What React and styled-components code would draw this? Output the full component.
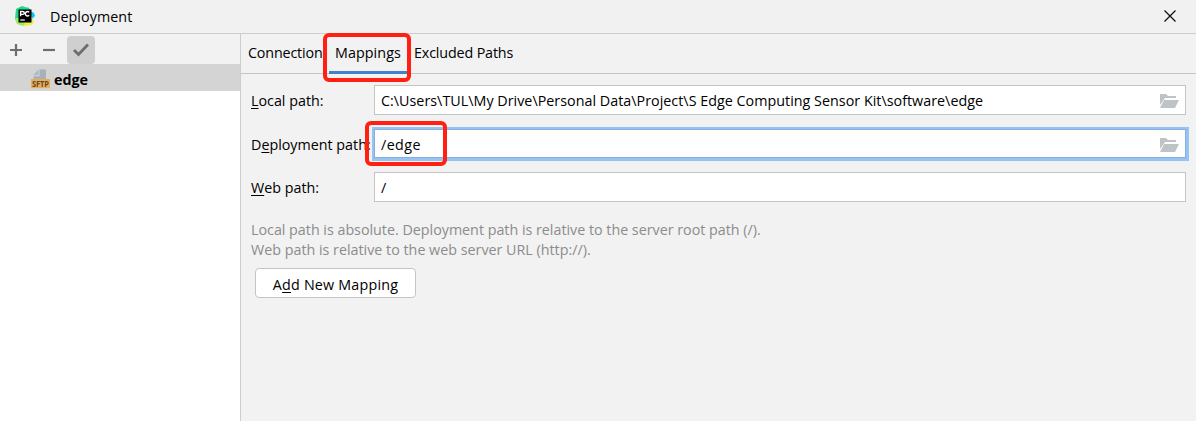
import React from 'react';
import styled, { createGlobalStyle } from 'styled-components';

const GlobalStyle = createGlobalStyle`
  * { box-sizing: border-box; }
  body {
    margin: 0;
    background: #f2f2f2;
    color: #000;
    font: 14.3px/20px "Open Sans", "Noto Sans", sans-serif;
    overflow: hidden;
  }
`;

const Window = styled.div`
  width: 1196px;
  height: 421px;
  display: flex;
  flex-direction: column;
  background: #f2f2f2;
  border-top-left-radius: 8px;
`;

const TitleBar = styled.header`
  height: 34px;
  flex: none;
  display: flex;
  align-items: center;
  padding: 0 19px 1px 15px;
  border-bottom: 1px solid #cdcdcd;
  background: #f1f1f1;
`;

const Title = styled.div`
  flex: 1;
  margin-left: 15px;
  padding-top: 1px;
`;

const Text = styled.span`
  white-space: pre;
  letter-spacing: ${(p) => p.$track || 0}px;
`;

const Body = styled.div`
  flex: 1;
  display: flex;
  min-height: 0;
`;

const Sidebar = styled.aside`
  width: 241px;
  flex: none;
  background: #fff;
  border-right: 1px solid #cdcdcd;
`;

const Toolbar = styled.div`
  height: 30px;
  display: flex;
  align-items: center;
  gap: 4.5px;
  padding: 1px 0 0 2px;
  background: #f2f2f2;
`;

const ToolButton = styled.div`
  width: 28px;
  height: 28px;
  display: grid;
  place-items: center;
  border-radius: 4px;
  background: ${(p) => (p.$active ? '#cfcfcf' : 'transparent')};
`;

const ServerRow = styled.div`
  height: 27px;
  display: flex;
  align-items: center;
  gap: 4px;
  padding: 3px 0 0 31px;
  background: #d4d4d4;
  font-weight: 700;
`;

const ServerName = styled.div`
  padding-top: 2px;
`;

const Main = styled.main`
  flex: 1;
  min-width: 0;
`;

const Tabs = styled.nav`
  height: 40px;
  display: flex;
  border-bottom: 1px solid #c6c6c6;
`;

const Tab = styled.div`
  position: relative;
  width: ${(p) => p.$width}px;
  height: 40px;
  padding: 9px 0 0 ${(p) => p.$pad}px;
  border-bottom: 3px solid ${(p) => (p.$active ? '#4083c9' : 'transparent')};
`;

const Highlight = styled.div`
  position: absolute;
  z-index: 2;
  left: ${(p) => p.$x}px;
  top: ${(p) => p.$y}px;
  width: ${(p) => p.$w}px;
  height: ${(p) => p.$h}px;
  border: 4px solid #ff2012;
  border-radius: 6px;
  pointer-events: none;
`;

const Form = styled.div`
  display: flex;
  flex-direction: column;
  gap: 14px;
  padding: 11px 10px 0 10px;
`;

const Field = styled.label`
  height: ${(p) => p.$height || 30}px;
  display: flex;
  align-items: center;
`;

const FieldName = styled.span`
  width: 123px;
  flex: none;
  padding-top: ${(p) => p.$drop ?? 3}px;
  white-space: nowrap;
`;

const Input = styled.div`
  position: relative;
  flex: 1;
  height: 100%;
  display: flex;
  align-items: center;
  justify-content: space-between;
  padding: ${(p) => p.$drop ?? 3}px 6px 0 6px;
  background: #fff;
  border: 1px solid ${(p) => (p.$focused ? '#87afda' : '#c4c4c4')};
  box-shadow: ${(p) => (p.$focused ? '0.5px 0.5px 0 2.5px #97c3f3' : 'none')};
`;

const Mnemonic = styled.u`
  text-decoration-thickness: 1px;
  text-underline-offset: 2px;
`;

const Hint = styled.div`
  margin: 18px 0 0 10px;
  color: #8c8c8c;
`;

const Button = styled.div`
  width: 161px;
  height: 30px;
  margin: 8px 0 0 14px;
  display: flex;
  align-items: center;
  justify-content: center;
  padding-top: 4px;
  background: #fff;
  border: 1px solid #c4c4c4;
  border-radius: 4px;
`;

const PyCharmIcon = () => (
  <svg width="20" height="20" viewBox="0 0 20 20">
    <path d="M1 3 7 0l6 2 1 6-5 11-7-2L0 13Z" fill="#21d789" />
    <path d="m12 1 3 2 1 4-5-1Z" fill="#18d68c" />
    <path d="m15 5 4 2 1 3-3 3-3-5Z" fill="#07c3f2" />
    <path d="m4 16 12-6 3 5-2 4-8 1Z" fill="#e8f34a" />
    <path d="M0 12h4l6 6-2 2-6-2Z" fill="#9bea62" />
    <rect x="3.5" y="3.5" width="13" height="13" />
    <path d="M5.6 10.2V5.5h2.2c2 0 2 2.9 0 2.9H5.8M14.2 6.3C12.5 4.8 10.4 5.8 10.4 7.8s2.1 3 3.8 1.5" fill="none" stroke="#fff" strokeWidth="1.4" />
    <path d="M5.3 13.4h4.5v1.2H5.3z" fill="#fff" />
  </svg>
);

const CloseIcon = () => (
  <svg width="14" height="14" viewBox="0 0 14 14">
    <path d="m1.5 1.5 11 11m0-11-11 11" fill="none" stroke="#111" strokeWidth="1.3" />
  </svg>
);

const ToolIcon = ({ d, width }) => (
  <svg width="20" height="20" viewBox="0 0 20 20">
    <path d={d} fill="none" stroke="#6e6e6e" strokeWidth={width} />
  </svg>
);

const SftpLabel = styled.text`
  font: 700 9px "Open Sans", sans-serif;
  fill: #5b4830;
`;

const SftpIcon = () => (
  <svg width="19" height="24" viewBox="0 -2 19 24">
    <path d="M7.5.5v5.7H2Z" fill="#9aa7b0" opacity=".6" />
    <path d="M8.5.5H15V10H2.5V7.2h6Z" fill="#9aa7b0" opacity=".8" />
    <path d="M0 10h19v9.2H0z" fill="#e9ad57" />
    <SftpLabel x="1" y="17.9" textLength="17" lengthAdjust="spacingAndGlyphs">SFTP</SftpLabel>
  </svg>
);

const FolderIcon = () => (
  <svg width="20" height="17" viewBox="0 0 20 17">
    <path d="M1 12V1h6l2 2h8v2H6Z" fill="#bec3c7" />
    <path d="M5 7h15l-4 8H1Z" fill="#bec3c7" />
  </svg>
);

export default function App() {
  return (
    <>
      <GlobalStyle />
      <Window>
        <TitleBar>
          <PyCharmIcon />
          <Title><Text $track={0.07}>Deployment</Text></Title>
          <CloseIcon />
        </TitleBar>
        <Body>
          <Sidebar>
            <Toolbar>
              <ToolButton><ToolIcon d="M10 4v12M4 10h12" width={2.2} /></ToolButton>
              <ToolButton><ToolIcon d="M4 10h12" width={2.2} /></ToolButton>
              <ToolButton $active><ToolIcon d="m3 10 4.5 4.5L17 4.5" width={2.8} /></ToolButton>
            </Toolbar>
            <ServerRow>
              <SftpIcon />
              <ServerName><Text>edge</Text></ServerName>
            </ServerRow>
          </Sidebar>
          <Main>
            <Tabs>
              <Tab $width={88} $pad={7}><Text $track={-0.15}>Connection</Text></Tab>
              <Tab $width={79} $pad={6} $active>
                <Text $track={0.08}>Mappings</Text>
                <Highlight $x={-6} $y={-1} $w={88} $h={49} />
              </Tab>
              <Tab $width={120} $pad={6}><Text $track={-0.14}>Excluded Paths</Text></Tab>
            </Tabs>
            <Form>
              <Field $height={30}>
                <FieldName $drop={2}><Text><Mnemonic>L</Mnemonic>ocal path:</Text></FieldName>
                <Input $drop={2}>
                  <Text $track={0.025}>C:\Users\TUL\My Drive\Personal Data\Project\S Edge Computing Sensor Kit\software\edge</Text>
                  <FolderIcon />
                </Input>
              </Field>
              <Field $height={29}>
                <FieldName><Text>D<Mnemonic>e</Mnemonic>ployment path:</Text></FieldName>
                <Input $focused>
                  <Text $track={0.4}>/edge</Text>
                  <FolderIcon />
                  <Highlight $x={-10} $y={-9} $w={82} $h={45} />
                </Input>
              </Field>
              <Field>
                <FieldName $drop={2}><Text><Mnemonic>W</Mnemonic>eb path:</Text></FieldName>
                <Input $drop={2}><Text>/</Text></Input>
              </Field>
            </Form>
            <Hint>
              <div><Text $track={-0.01}>Local path is absolute. Deployment path is relative to the server root path (/).</Text></div>
              <div><Text>Web path is relative to the web server URL (http://).</Text></div>
            </Hint>
            <Button><Text $track={0.2}>A<Mnemonic>d</Mnemonic>d New Mapping</Text></Button>
          </Main>
        </Body>
      </Window>
    </>
  );
}
